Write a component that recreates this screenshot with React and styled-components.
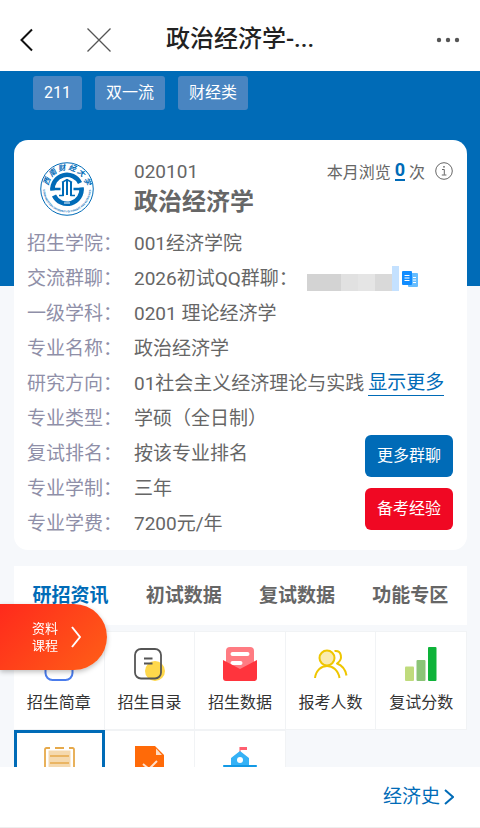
import React, { useState } from 'react';
import styled, { createGlobalStyle } from 'styled-components';

const color = {
  blue: '#006bb7',
  tagBlue: '#4985c1',
  red: '#f00823',
  white: '#ffffff',
  page: '#f6f8fb',
  line: '#f1f3f5',
  label: '#8f8fa8',
  text: '#666666',
  dark: '#333333',
};

const GlobalStyle = createGlobalStyle`
  * {
    box-sizing: border-box;
  }
  body {
    margin: 0;
    background: ${color.page};
    color: ${color.text};
    font-family: Roboto, 'Noto Sans CJK SC', sans-serif;
  }
  button {
    padding: 0;
    border: 0;
    background: none;
    color: inherit;
    font: inherit;
    cursor: pointer;
  }
  a {
    color: ${color.blue};
    text-decoration: none;
  }
  svg {
    display: block;
    flex-shrink: 0;
  }
`;

const Page = styled.div`
  display: flex;
  flex-direction: column;
  height: 100vh;
`;

const Header = styled.header`
  display: grid;
  grid-template-columns: 1fr auto 1fr;
  align-items: center;
  padding: 22px 20px 14px;
  background: ${color.white};
`;

const HeaderLeft = styled.div`
  display: flex;
  align-items: center;
  gap: 54px;
`;

const HeaderTitle = styled.h1`
  margin: 0;
  color: #222222;
  font-size: 24px;
  font-weight: 500;
  line-height: 35px;
`;

const MoreButton = styled.button`
  justify-self: end;
`;

const Main = styled.main`
  flex: 1;
  min-height: 0;
  overflow-y: auto;
  scrollbar-width: none;
`;

const Hero = styled.div`
  padding: 5px 33px 176px;
  background: ${color.blue};
`;

const TagList = styled.div`
  display: flex;
  gap: 13px;
`;

const Tag = styled.span`
  padding: 0 11px;
  border-radius: 3px;
  background: ${color.tagBlue};
  color: ${color.white};
  font-size: 16px;
  line-height: 34px;
`;

const Content = styled.div`
  margin-top: -146px;
  padding: 0 13px 0 14px;
`;

const Card = styled.section`
  position: relative;
  margin-bottom: 16px;
  padding: 20px 14px 9px 13px;
  border-radius: 14px;
  background: ${color.white};
`;

const CardTop = styled.div`
  display: grid;
  grid-template-columns: 107px 1fr auto;
  margin-bottom: 6px;
`;

const LogoBox = styled.div`
  padding: 2px 13px;
`;

const MajorCode = styled.div`
  font-size: 19px;
  line-height: 24px;
`;

const MajorName = styled.h2`
  margin: 0;
  font-size: 24px;
  font-weight: 700;
  line-height: 36px;
`;

const Views = styled.div`
  display: flex;
  align-items: center;
  gap: 4px;
  height: 22px;
  font-size: 16px;
`;

const ViewCount = styled.a`
  border-bottom: 2px solid ${color.blue};
  font-size: 18px;
  font-weight: 700;
  line-height: 18px;
`;

const InfoButton = styled.button`
  margin-left: 6px;
`;

const InfoList = styled.dl`
  display: grid;
  grid-template-columns: 107px 1fr;
  margin: 0;
  font-size: 19px;
  line-height: 35px;
`;

const InfoLabel = styled.dt`
  color: ${color.label};
  white-space: nowrap;
`;

const InfoValue = styled.dd`
  display: flex;
  align-items: center;
  margin: 0;
  white-space: nowrap;
`;

const ShowMore = styled.a`
  margin-left: 4px;
  border-bottom: 1px solid ${color.blue};
  line-height: 24px;
`;

const GroupNumber = styled.span`
  display: flex;
  align-items: center;
  gap: 3px;
  margin-left: 9px;
`;

const CardActions = styled.div`
  position: absolute;
  right: 14px;
  bottom: 20px;
  display: flex;
  flex-direction: column;
  gap: 11px;
`;

const ActionButton = styled.button`
  padding: 0 12px;
  border-radius: 6px;
  background: ${(props) => (props.$red ? color.red : color.blue)};
  color: ${color.white};
  font-size: 16px;
  line-height: 42px;
`;

const Tabs = styled.nav`
  display: grid;
  grid-template-columns: repeat(4, 1fr);
  margin-bottom: 6px;
  background: ${color.white};
`;

const TabButton = styled.button`
  color: ${(props) => (props.$active ? color.blue : color.text)};
  font-size: 19px;
  font-weight: 700;
  line-height: 59px;
  white-space: nowrap;
`;

const MenuGrid = styled.div`
  display: grid;
  grid-template-columns: repeat(5, 1fr);
`;

const MenuItem = styled.a`
  display: flex;
  flex-direction: column;
  align-items: center;
  gap: 9px;
  padding: ${(props) => (props.$active ? '13px 0 11px' : '15px 0 13px')};
  border: ${(props) => (props.$active ? `3px solid ${color.blue}` : `1px solid ${color.line}`)};
  border-left-width: ${(props) => (props.$active ? '3px' : '0')};
  background: ${color.white};
  color: ${color.dark};
  font-size: 16px;
  line-height: 26px;
  white-space: nowrap;
`;

const FloatLink = styled.a`
  position: fixed;
  bottom: 158px;
  left: 0;
  display: flex;
  align-items: center;
  gap: 11px;
  padding: 16px 26px 16px 32px;
  border-radius: 0 34px 34px 0;
  background: linear-gradient(135deg, #ff2a1c, #ff5f17);
  box-shadow: 0 2px 5px rgba(0, 0, 0, 0.25);
  color: ${color.white};
  font-size: 13px;
  line-height: 17px;
`;

const FloatText = styled.span`
  width: 28px;
`;

const Footer = styled.footer`
  display: flex;
  justify-content: flex-end;
  padding: 12px 26px;
  border-bottom: 1px solid #eeeeee;
  background: ${color.white};
`;

const NextLink = styled.a`
  display: flex;
  align-items: center;
  gap: 4px;
  font-size: 19px;
  line-height: 36px;
`;

const SchoolLogo = () => (
  <svg width="54" height="54" viewBox="0 0 108 108" fill="none" stroke={color.blue}>
    <defs>
      <path id="logoTop" d="M16 54a38 38 0 0 1 76 0" />
      <path id="logoBottom" d="M6 53a48 48 0 0 0 96 0" />
    </defs>
    <circle cx="54" cy="54" r="52.5" strokeWidth="2" />
    <path d="M25 57A29 29 0 0 1 80 42" strokeWidth="9" />
    <path d="M83 51A29 29 0 0 1 28 67" strokeWidth="9" />
    <path d="M21 54h20M67 54h20" strokeWidth="5" />
    <path d="M46 68V40M54 66V34M62 68V40" strokeWidth="4" />
    <path d="M44 41l10-6 10 6M38 67h9M61 67h9" strokeWidth="3" />
    <path d="M48 82h12" stroke={color.white} strokeWidth="2" />
    <g
      fill={color.blue}
      stroke="none"
      fontFamily="'Noto Sans CJK SC', sans-serif"
      fontWeight="700"
      textAnchor="middle"
    >
      <text fontSize="15" fontStyle="italic">
        <textPath href="#logoTop" startOffset="50%">西 南 财 经 大 学</textPath>
      </text>
      <text fontSize="5">
        <textPath href="#logoBottom" startOffset="50%">SOUTHWESTERN UNIVERSITY OF FINANCE AND ECONOMICS</textPath>
      </text>
    </g>
  </svg>
);

const Chevron = ({ width, height, stroke = 2 }) => (
  <svg width={width} height={height} viewBox={`0 0 ${width} ${height}`} fill="none">
    <path
      d={`M1 1L${width - 1} ${height / 2}L1 ${height - 1}`}
      stroke="currentColor"
      strokeWidth={stroke}
    />
  </svg>
);

const BackIcon = () => (
  <svg width="13" height="24" viewBox="0 0 13 24" fill="none">
    <path d="M12 1.5L1.5 12 12 22.5" stroke="#111111" strokeWidth="2" />
  </svg>
);

const CloseIcon = () => (
  <svg width="24" height="24" viewBox="0 0 24 24">
    <path d="M.5.5l23 23M23.5.5l-23 23" stroke="#555555" strokeWidth="1.3" />
  </svg>
);

const DotsIcon = () => (
  <svg width="24" height="6" viewBox="0 0 24 6" fill="#555555">
    <circle cx="3" cy="3" r="2.2" />
    <circle cx="12" cy="3" r="2.2" />
    <circle cx="21" cy="3" r="2.2" />
  </svg>
);

const InfoIcon = () => (
  <svg width="18" height="18" viewBox="0 0 18 18" fill="none" stroke="#666666">
    <circle cx="9" cy="9" r="8.3" />
    <path d="M7 7.5h2.3v5.3M6.8 13h4.6" />
    <circle cx="9" cy="4.8" r=".9" fill="#666666" stroke="none" />
  </svg>
);

const HiddenNumber = () => (
  <svg width="92" height="25" viewBox="0 0 92 25">
    <path d="M0 8h34v17H0z" fill="#d3d3d3" />
    <path d="M34 8h17v17H34z" fill="#e1e1e1" />
    <path d="M51 8h17v17H51z" fill="#e5e5e5" />
    <path d="M68 8h17v17H68z" fill="#d9d9d9" />
    <path d="M85 0h7v25h-7z" fill="#c4e1ff" />
  </svg>
);

const CopyIcon = () => (
  <svg width="16" height="16" viewBox="0 0 16 16">
    <rect x="6" y="2" width="10" height="14" rx="1" fill="#66bdff" />
    <rect width="10" height="14" rx="1" fill="#108cff" />
    <path d="M2.5 4.5h5M2.5 7h5M2.5 9.5h5M11 6.5h3M11 9h3M11 11.5h3" stroke="#ffffff" />
  </svg>
);

const BrochureIcon = () => (
  <svg width="34" height="34" viewBox="0 0 34 34" fill="none">
    <rect x="3.5" y="1" width="27" height="32" rx="7" stroke="#4a7cec" strokeWidth="2" />
    <path d="M11 7h12M11 12h8" stroke="#4a7cec" strokeWidth="2" />
  </svg>
);

const CatalogIcon = () => (
  <svg width="34" height="34" viewBox="0 0 34 34" fill="none">
    <circle cx="23" cy="24" r="10" fill="#ffd84b" />
    <rect x="3" y="2" width="26" height="29.5" rx="6" stroke="#555555" strokeWidth="1.8" />
    <path d="M12 11.5h8.5M12 16.5h8.5" stroke="#555555" strokeWidth="1.8" />
  </svg>
);

const DataIcon = () => (
  <svg width="34" height="34" viewBox="0 0 34 34">
    <path d="M3 4q0-4 4-4h20q4 0 4 4v18H3z" fill="#ff7b82" />
    <path d="M9.500 7h15M9.500 16h8" stroke="#ffffff" strokeWidth="4" strokeLinecap="round" />
    <path d="M0 13l17 9 17-9v18q0 3-3 3H3q-3 0-3-3z" fill="#ff343d" />
  </svg>
);

const PeopleIcon = () => (
  <svg width="34" height="34" viewBox="0 0 34 34" fill="none" stroke="#efc600" strokeWidth="2">
    <path d="M20.5 4c7-1 9 8 2.500 12.500q8 3 9.500 12" strokeLinejoin="round" />
    <circle cx="13" cy="11" r="7.500" fill="#faebb0" />
    <path d="M1 31c2-16 22-16 24.500 0" />
  </svg>
);

const ScoreIcon = () => (
  <svg width="34" height="34" viewBox="0 0 34 34">
    <rect x="1" y="19.500" width="9" height="14.500" rx="1" fill="#bfdb7c" />
    <rect x="12.500" y="13" width="9" height="21" rx="1" fill="#8bc477" />
    <rect x="24" y="0" width="8.500" height="34" rx="1" fill="#0eb339" />
  </svg>
);

const NoteIcon = () => (
  <svg width="34" height="34" viewBox="0 0 34 34" fill="none">
    <path d="M6.500 4.500h22V30h-22z" fill="#f5d9ae" />
    <path
      d="M8 2H4.500Q3 2 3 3.500V33h29V3.500Q32 2 30.500 2H27M13 2h9"
      stroke="#e6a94b"
      strokeWidth="1.800"
    />
    <path d="M8 10h19M8 17h19M8 24h19" stroke="#e6a94b" strokeWidth="1.500" />
  </svg>
);

const CheckDocIcon = () => (
  <svg width="34" height="34" viewBox="0 0 34 34" fill="none">
    <path d="M3 0h20l9 9v25H3z" fill="#ff6a08" />
    <path d="M24 2.500l6 6.500h-6z" fill="#ffdcc4" />
    <path d="M11 18l6 5 8-8" stroke="#ffe0cc" strokeWidth="2" />
  </svg>
);

const SchoolIcon = () => (
  <svg width="34" height="34" viewBox="0 0 34 34">
    <path d="M17 1v7" stroke="#ff8a94" strokeWidth="1.500" />
    <path d="M17 1h7v3h-7z" fill="#ff5f70" />
    <path d="M17 5l9 7v7h8v15H0V19h8v-7z" fill="#35b2f6" />
    <path d="M1 19h32v2H1z" fill="#1499e4" />
    <circle cx="17" cy="14" r="3" fill="#ffffff" />
    <path d="M14 26h6v8h-6z" fill="#ffffff" />
  </svg>
);

const infos = [
  { label: '招生学院', value: '001经济学院' },
  { label: '交流群聊', value: '2026初试QQ群聊：', hidden: true },
  { label: '一级学科', value: '0201 理论经济学' },
  { label: '专业名称', value: '政治经济学' },
  { label: '研究方向', value: '01社会主义经济理论与实践', more: true },
  { label: '专业类型', value: '学硕（全日制）' },
  { label: '复试排名', value: '按该专业排名' },
  { label: '专业学制', value: '三年' },
  { label: '专业学费', value: '7200元/年' },
];

const tabs = ['研招资讯', '初试数据', '复试数据', '功能专区'];

const menus = [
  { name: '招生简章', Icon: BrochureIcon },
  { name: '招生目录', Icon: CatalogIcon },
  { name: '招生数据', Icon: DataIcon },
  { name: '报考人数', Icon: PeopleIcon },
  { name: '复试分数', Icon: ScoreIcon },
  { name: '', Icon: NoteIcon, active: true },
  { name: '', Icon: CheckDocIcon },
  { name: '', Icon: SchoolIcon },
];

const App = () => {
  const [activeTab, setActiveTab] = useState(0);

  return (
    <Page>
      <GlobalStyle />
      <Header>
        <HeaderLeft>
          <button type="button"><BackIcon /></button>
          <button type="button"><CloseIcon /></button>
        </HeaderLeft>
        <HeaderTitle>政治经济学-...</HeaderTitle>
        <MoreButton type="button"><DotsIcon /></MoreButton>
      </Header>

      <Main>
        <Hero>
          <TagList>
            <Tag>211</Tag>
            <Tag>双一流</Tag>
            <Tag>财经类</Tag>
          </TagList>
        </Hero>

        <Content>
          <Card>
            <CardTop>
              <LogoBox><SchoolLogo /></LogoBox>
              <div>
                <MajorCode>020101</MajorCode>
                <MajorName>政治经济学</MajorName>
              </div>
              <Views>
                本月浏览
                <ViewCount href="#views">0</ViewCount>
                次
                <InfoButton type="button"><InfoIcon /></InfoButton>
              </Views>
            </CardTop>

            <InfoList>
              {infos.map((info) => (
                <React.Fragment key={info.label}>
                  <InfoLabel>{info.label}：</InfoLabel>
                  <InfoValue>
                    {info.value}
                    {info.hidden && (
                      <GroupNumber>
                        <HiddenNumber />
                        <CopyIcon />
                      </GroupNumber>
                    )}
                    {info.more && <ShowMore href="#more">显示更多</ShowMore>}
                  </InfoValue>
                </React.Fragment>
              ))}
            </InfoList>

            <CardActions>
              <ActionButton type="button">更多群聊</ActionButton>
              <ActionButton type="button" $red>备考经验</ActionButton>
            </CardActions>
          </Card>

          <Tabs>
            {tabs.map((tab, index) => (
              <TabButton
                key={tab}
                type="button"
                $active={index === activeTab}
                onClick={() => setActiveTab(index)}
              >
                {tab}
              </TabButton>
            ))}
          </Tabs>

          <MenuGrid>
            {menus.map(({ name, Icon, active }, index) => (
              <MenuItem key={index} href={`#menu${index}`} $active={active}>
                <Icon />
                <span>{name}</span>
              </MenuItem>
            ))}
          </MenuGrid>
        </Content>
      </Main>

      <FloatLink href="#course">
        <FloatText>资料课程</FloatText>
        <Chevron width={10} height={22} />
      </FloatLink>

      <Footer>
        <NextLink href="#next">
          经济史
          <Chevron width={10} height={16} />
        </NextLink>
      </Footer>
    </Page>
  );
};

export default App;
